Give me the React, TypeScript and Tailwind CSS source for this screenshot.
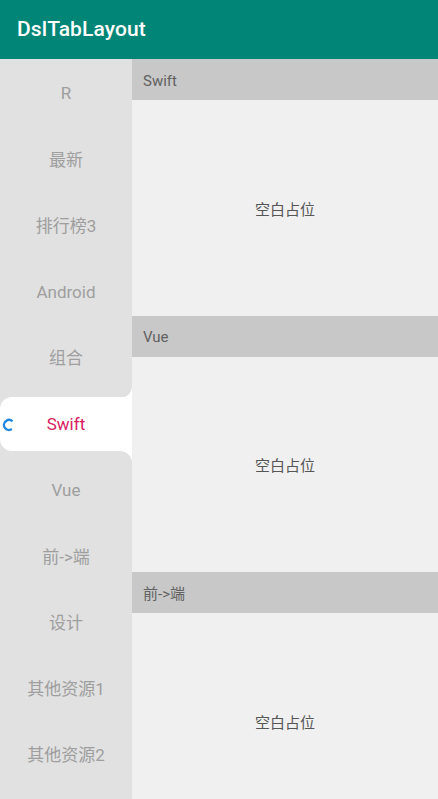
const tabs = ['R', '最新', '排行榜3', 'Android', '组合', 'Swift', 'Vue', '前->端', '设计', '其他资源1', '其他资源2']
const sections = ['Swift', 'Vue', '前->端']

const Loading = () => (
    <svg width="14" height="14" viewBox="0 0 14 14" className="absolute left-[2px] top-[26px]">
        <circle cx="7" cy="7" r="5" fill="none" stroke="#1E88E5" strokeWidth="2.4"
            strokeDasharray="22 10" transform="rotate(55 7 7)" />
    </svg>
)

const App = () => {
    return (
        <div className="w-[438px] h-[799px] overflow-hidden bg-[#f0f0f0] font-['Roboto','Noto_Sans_CJK_SC',sans-serif]">
            <div className="h-[59px] bg-[#008577] flex items-center px-[17px] shadow">
                <h1 className="text-white text-[21px] font-medium tracking-[0.1px]">DslTabLayout</h1>
            </div>
            <div className="flex">
                <div className="w-[132px] h-[740px] bg-[#e1e1e1] flex flex-col pt-[2px]">
                    {tabs.map((t) => t === 'Swift' ? (
                        <div key={t} className="relative h-[66.2px] shrink-0">
                            <div className="absolute right-0 top-[-6px] w-[12px] h-[12px] bg-white">
                                <div className="w-full h-full bg-[#e1e1e1] rounded-br-[12px]"></div>
                            </div>
                            <div className="absolute inset-x-0 top-[5px] bottom-[7px] bg-white rounded-l-[12px]"></div>
                            <div className="absolute right-0 bottom-[-5px] w-[12px] h-[12px] bg-white">
                                <div className="w-full h-full bg-[#e1e1e1] rounded-tr-[12px]"></div>
                            </div>
                            <Loading />
                            <div className="relative h-full flex items-center justify-center text-[17px] text-[#d81b60]">{t}</div>
                        </div>
                    ) : (
                        <div key={t} className="h-[66.2px] shrink-0 flex items-center justify-center text-[17px] text-[#9e9e9e]">{t}</div>
                    ))}
                </div>
                <div className="flex-1 flex flex-col">
                    {sections.map((s) => (
                        <div key={s}>
                            <div className="h-[41px] bg-[#c8c8c8] flex items-center pl-[11px] pt-[3px] text-[15px] text-[#616161]">{s}</div>
                            <div className="h-[215.7px] flex items-center justify-center pt-[4px] text-[15px] text-[#555]">空白占位</div>
                        </div>
                    ))}
                </div>
            </div>
        </div>
    )
}
export default App
